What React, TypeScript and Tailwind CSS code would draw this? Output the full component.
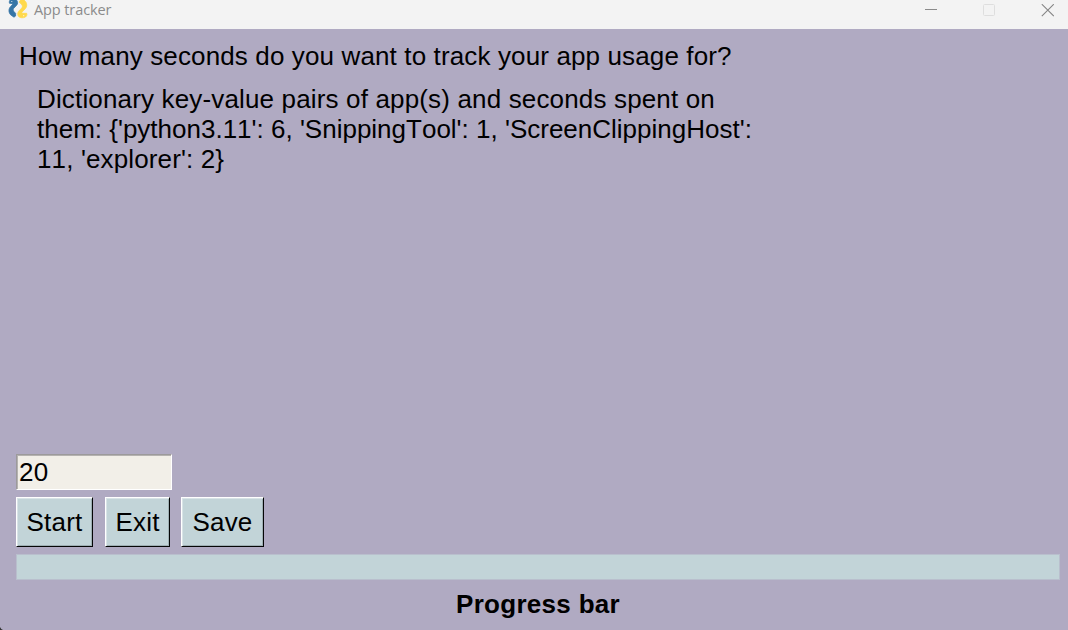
import { useState } from "react";

const RAISED =
  "h-[50px] border border-t-white border-l-white border-r-[#050606] border-b-[#050606] bg-[#c2d4d8] text-center leading-[48px] tracking-[0.2px] whitespace-nowrap shadow-[inset_1px_1px_0_#d9e4e7,inset_-1px_-1px_0_#9eafb3]";

function PythonIcon() {
  return (
    <svg className="block h-[22px] w-[20px]" viewBox="0 0 20 22">
      <path
        d="M2.200 0H8.500C9.800 1.500 10 3.800 8.700 5.200L5.700 8.300C4.800 9.500 5 10.800 6.300 12L7.600 13.300V16L6 17.200L2.500 14.700C.7 12.500.5 9.800 1.700 7.700L5.200 3.700L1.500 3.300C1.200 2 1.200 1 2.200 0Z"
        fill="#3675a6"
        stroke="#3675a6"
        strokeWidth=".8"
        strokeLinejoin="round"
      />
      <path
        d="M12.500 0H16L17.800 1.900C19.200 4 19 6.500 17.500 8.500L13.800 12.300L14.500 13.300H18.700C19.200 14.800 18.700 16 17.500 17C15.300 18.200 12.400 18 10.800 16.700C9.400 15.200 9.400 12.800 10.700 11.200L13.800 8C14.900 6.700 14.500 5.500 13.400 4.300L11.300 2.100Z"
        fill="#ffd94c"
        stroke="#ffd94c"
        strokeWidth=".8"
        strokeLinejoin="round"
      />
      <circle cx="3.800" cy="1.500" r=".6" fill="#e8eff4" />
      <circle cx="15.700" cy="15.700" r=".6" fill="#fff7d9" />
    </svg>
  );
}

function TitleBar() {
  return (
    <header className="flex h-[29px] items-start justify-between bg-[#f3f3f3] pl-2">
      <div className="flex">
        <PythonIcon />
        <span className="ml-[6px] font-['Open_Sans',sans-serif] text-[14.5px] leading-5 tracking-[-0.1px] whitespace-nowrap text-[#8b8b8b]">
          App tracker
        </span>
      </div>
      <div className="flex h-5 items-center gap-[45px] pr-[14px]">
        <svg className="size-[13px]" viewBox="0 0 13 13">
          <path d="M0 5.500H12" stroke="#8b8b8b" />
        </svg>
        <svg className="size-[13px]" viewBox="0 0 13 13">
          <rect x="0.500" y=".5" width="11" height="11" rx="1" fill="none" stroke="#dedede" />
        </svg>
        <svg className="size-[13px]" viewBox="0 0 13 13">
          <path d="M.8.2L12.800 12.200M12.800.2L.8 12.200" stroke="#858585" strokeWidth="1.1" />
        </svg>
      </div>
    </header>
  );
}

export default function App() {
  const [seconds, setSeconds] = useState("20");
  return (
    <div className="relative flex h-[630px] w-[1068px] flex-col overflow-hidden bg-[#b0aac2] font-['Liberation_Sans',Arial,sans-serif] text-[26px] text-black [font-kerning:none]">
      <TitleBar />
      <main className="flex flex-1 flex-col pr-2 pl-4">
        <p className="mt-3 pl-[3px] leading-[30px] whitespace-nowrap">
          <span className="tracking-[0.13px]">How many seconds do you want to track your app usage for?</span>
        </p>
        <div className="mt-[13px] flex h-[370px] flex-col items-start pl-[21px] leading-[30px] whitespace-nowrap">
          <span className="tracking-[0.155px]">Dictionary key-value pairs of app(s) and seconds spent on</span>
          <span className="tracking-[0px]">{"them: {'python3.11': 6, 'SnippingTool': 1, 'ScreenClippingHost':"}</span>
          <span className="tracking-[0.13px]">{"11, 'explorer': 2}"}</span>
        </div>
        <input
          className="block h-9 w-[156px] border border-t-[#9c9a9b] border-r-white border-b-white border-l-[#9c9a9b] bg-[#f2efe8] pl-0.5 tracking-[0.3px] shadow-[inset_1px_1px_0_#b5b2b0] outline-none"
          value={seconds}
          onChange={(e) => setSeconds(e.target.value)}
        />
        <div className="mt-[7px] flex">
          <button className={`${RAISED} w-[77px]`}>Start</button>
          <button className={`${RAISED} ml-3 w-[65px]`}>Exit</button>
          <button className={`${RAISED} ml-[11px] w-[83px]`}>Save</button>
        </div>
        <div className="mt-[7px] h-[26px] border border-[#b9bfcd] bg-[#c2d4d8]" />
        <p className="mt-[9px] text-center leading-[30px] font-bold tracking-[0.3px]">Progress bar</p>
      </main>
      <svg className="absolute bottom-0 left-0 size-[3px]" viewBox="0 0 3 3">
        <path d="M0 0V3H3Q1 2.500 0 0Z" fill="#333" />
      </svg>
    </div>
  );
}
